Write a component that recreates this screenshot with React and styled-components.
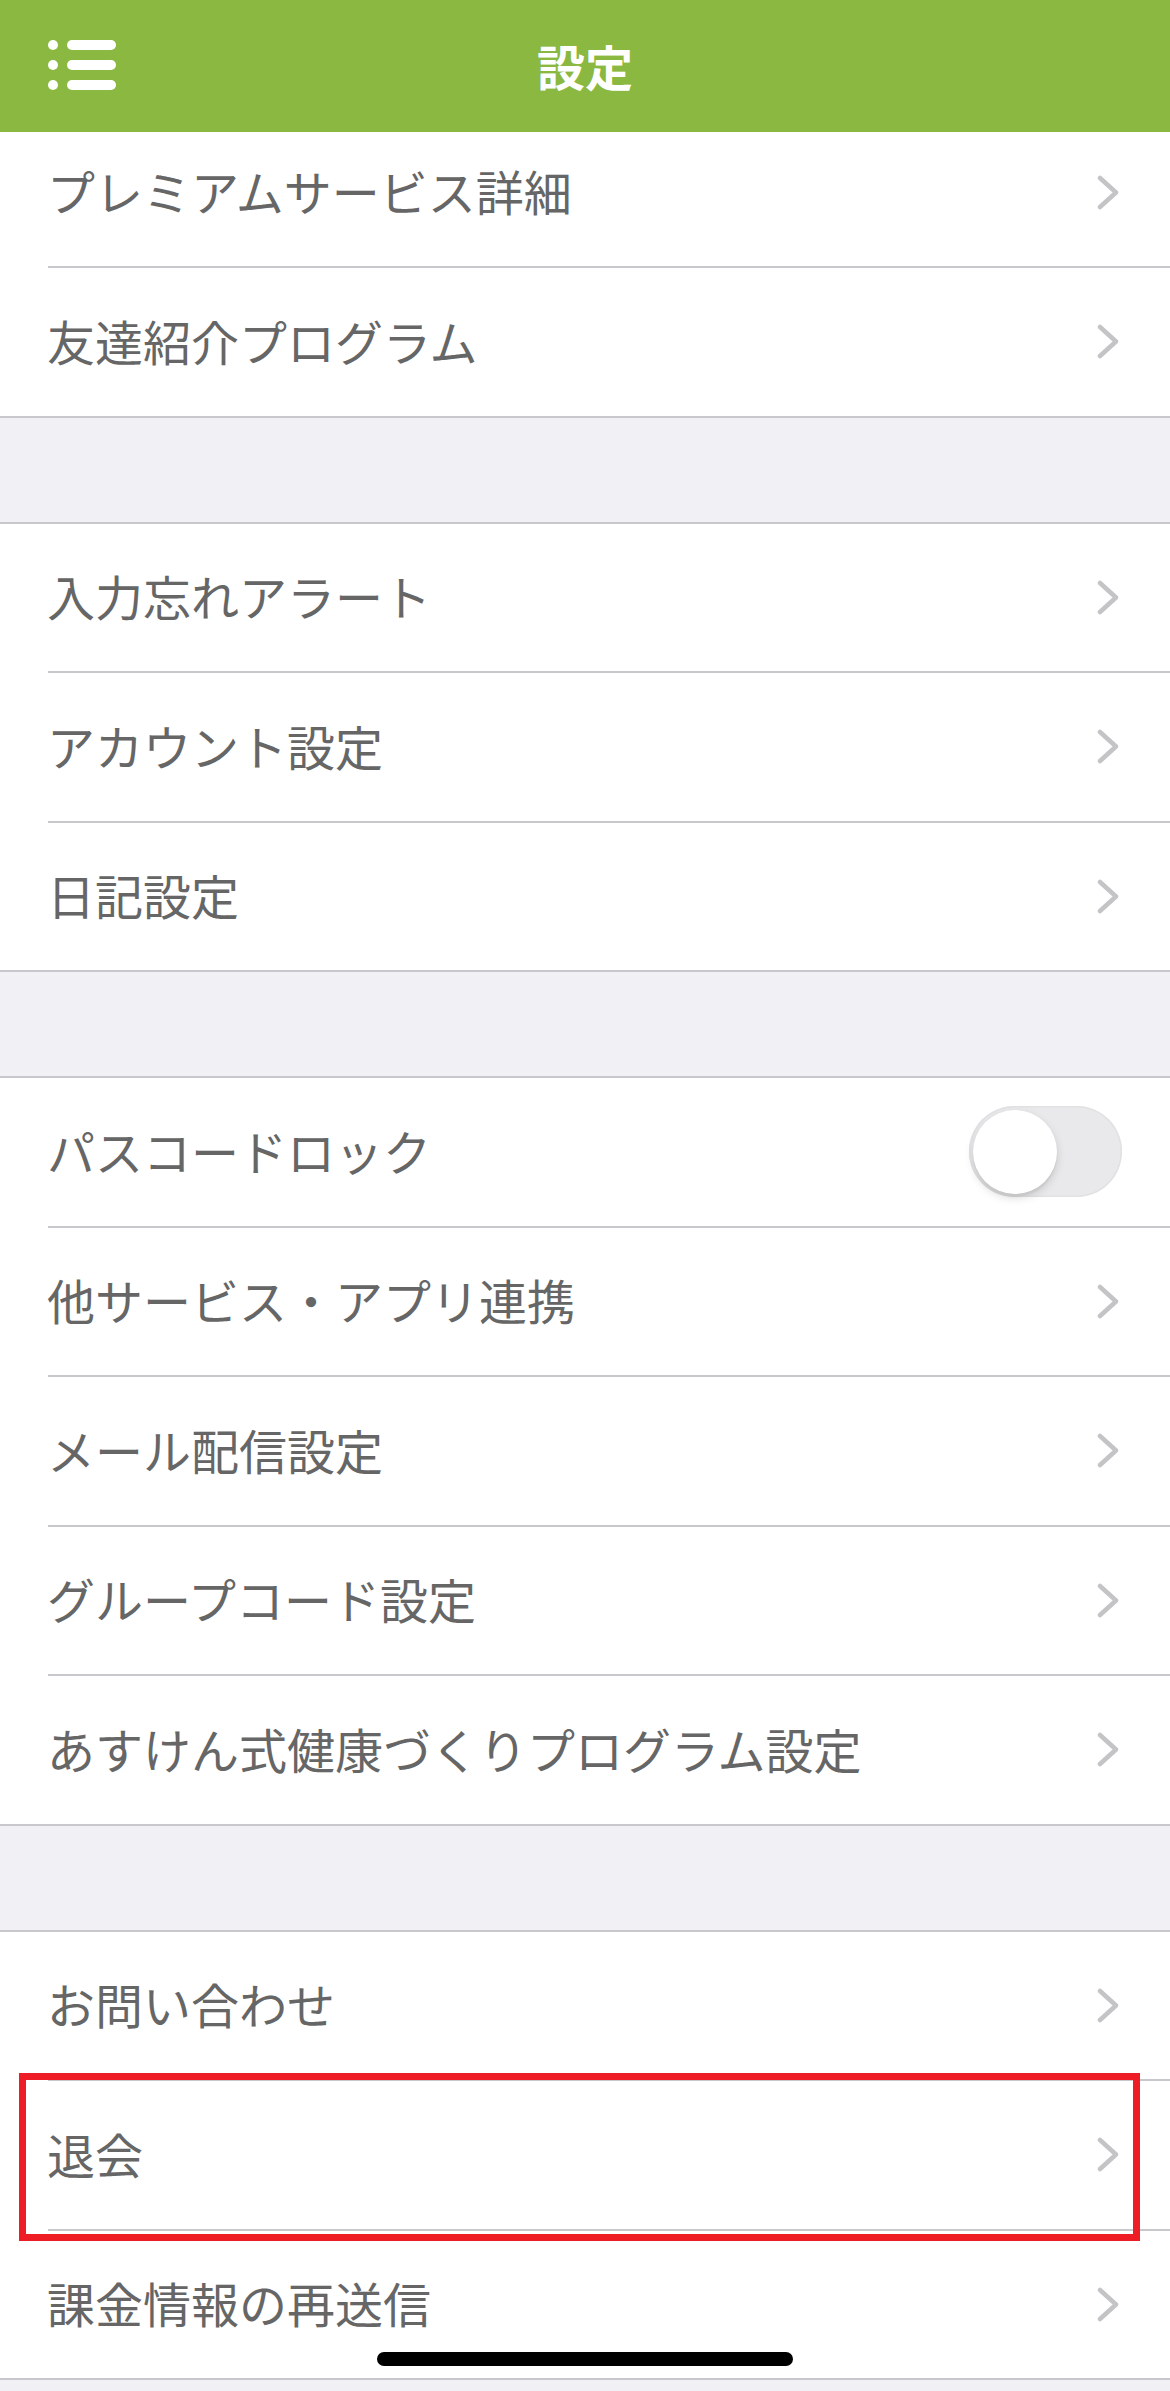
import styled, { createGlobalStyle } from 'styled-components';

const GlobalStyle = createGlobalStyle`
  html, body {
    margin: 0;
    padding: 0;
    background: #f0f0f5;
  }
  body {
    font-family: "Noto Sans CJK JP", "Noto Sans", sans-serif;
    -webkit-font-smoothing: antialiased;
  }
`;

const sections = [
  [
    { label: 'プレミアムサービス詳細' },
    { label: '友達紹介プログラム' },
  ],
  [
    { label: '入力忘れアラート' },
    { label: 'アカウント設定' },
    { label: '日記設定' },
  ],
  [
    { label: 'パスコードロック', toggle: true },
    { label: '他サービス・アプリ連携' },
    { label: 'メール配信設定' },
    { label: 'グループコード設定' },
    { label: 'あすけん式健康づくりプログラム設定' },
  ],
  [
    { label: 'お問い合わせ' },
    { label: '退会', marked: true },
    { label: '課金情報の再送信' },
  ],
];

function MenuIcon() {
  return (
    <svg width="68" height="50" viewBox="0 0 68 50" fill="#fff">
      <circle cx="5" cy="5" r="5" />
      <circle cx="5" cy="25" r="5" />
      <circle cx="5" cy="45" r="5" />
      <rect x="19" y="0" width="49" height="10" rx="5" />
      <rect x="19" y="20" width="49" height="10" rx="5" />
      <rect x="19" y="40" width="49" height="10" rx="5" />
    </svg>
  );
}

function Chevron() {
  return (
    <svg width="22" height="35" viewBox="0 0 22 35">
      <path
        d="M3 3 L19 17.5 L3 32"
        fill="none"
        stroke="#c4c4c7"
        strokeWidth="4.5"
        strokeLinecap="round"
        strokeLinejoin="round"
      />
    </svg>
  );
}

export default function App() {
  return (
    <Page>
      <GlobalStyle />
      <Header>
        <MenuButton aria-label="menu">
          <MenuIcon />
        </MenuButton>
        <Title>設定</Title>
      </Header>
      <Viewport>
        <Scroller>
          {sections.map((items, i) => (
            <Section key={i}>
              {items.map(item => (
                <Row key={item.label}>
                  <Inner>
                    <Label>{item.label}</Label>
                    {item.toggle ? (
                      <Toggle>
                        <Knob />
                      </Toggle>
                    ) : (
                      <Chevron />
                    )}
                  </Inner>
                  {item.marked && <Highlight />}
                </Row>
              ))}
            </Section>
          ))}
        </Scroller>
      </Viewport>
      <HomeBar />
    </Page>
  );
}

const Page = styled.div`
  position: relative;
  min-height: 100vh;
  background: #f0f0f5;
`;

const Header = styled.header`
  position: relative;
  display: flex;
  align-items: center;
  justify-content: center;
  height: 132px;
  background: #8ab840;
`;

const MenuButton = styled.div`
  position: absolute;
  left: 48px;
  top: 40px;
  display: flex;
`;

const Title = styled.h1`
  margin: 0;
  color: #fff;
  font-size: 48px;
  font-weight: 700;
  line-height: 1;
  padding-bottom: 2px;
`;

const Viewport = styled.main`
  overflow: hidden;
`;

const Scroller = styled.div`
  margin-top: -15.5px;
  display: flex;
  flex-direction: column;
  gap: 104px;
`;

const Section = styled.section`
  background: #fff;
  border-top: 2px solid #c8c7cc;
  border-bottom: 2px solid #c8c7cc;
`;

const Row = styled.div`
  position: relative;
  padding-left: 48px;

  &:last-child > div {
    border-bottom: none;
  }
`;

const Inner = styled.div`
  display: flex;
  align-items: center;
  justify-content: space-between;
  height: 147.5px;
  padding-right: 51px;
  border-bottom: 2px solid #c8c7cc;
`;

const Label = styled.span`
  margin-left: -1px;
  color: #666;
  font-size: 48px;
  line-height: 1;
  padding-bottom: 4px;
  white-space: nowrap;
`;

const Toggle = styled.div`
  display: flex;
  align-items: center;
  box-sizing: border-box;
  width: 153px;
  height: 91px;
  margin-right: -3px;
  padding: 0 4px;
  border-radius: 46px;
  background: #e9e9eb;
  box-shadow: inset 0 0 0 1.5px #e2e2e4;
`;

const Knob = styled.div`
  width: 84px;
  height: 84px;
  border-radius: 50%;
  background: #fff;
  box-shadow: 0 4px 10px rgba(0, 0, 0, 0.14), 0 3px 2px rgba(0, 0, 0, 0.05);
`;

const Highlight = styled.div`
  position: absolute;
  top: -8px;
  bottom: -10px;
  left: 19px;
  right: 30px;
  border: 7px solid #ee1c25;
  pointer-events: none;
`;

const HomeBar = styled.div`
  position: absolute;
  left: 50%;
  bottom: 25px;
  width: 416px;
  height: 14px;
  margin-left: -208px;
  border-radius: 7px;
  background: #000;
`;
